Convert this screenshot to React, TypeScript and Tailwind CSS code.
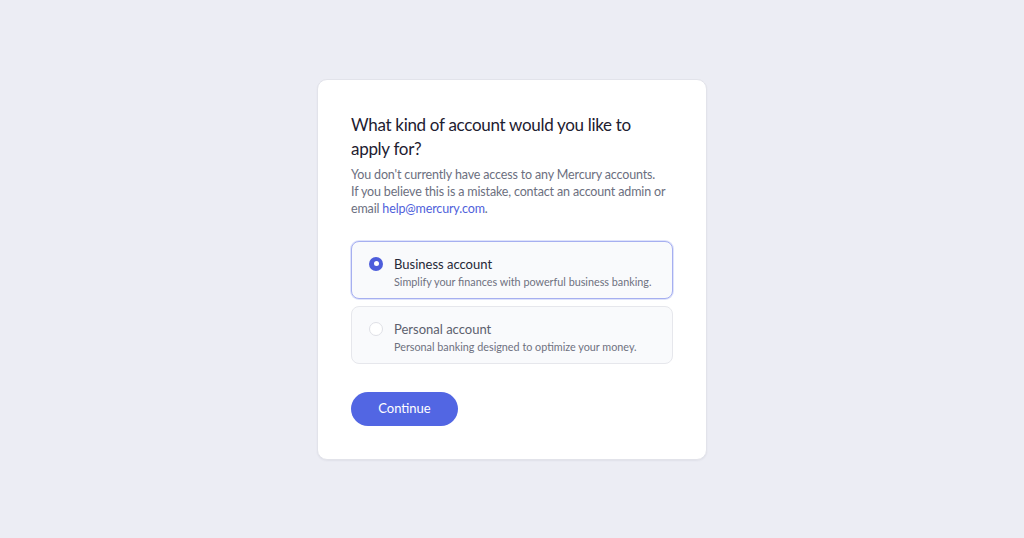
import { useState } from "react"

const OPTIONS = [
  {
    key: "business",
    title: "Business account",
    detail: "Simplify your finances with powerful business banking.",
  },
  {
    key: "personal",
    title: "Personal account",
    detail: "Personal banking designed to optimize your money.",
  },
]

export default function App() {
  const [selected, setSelected] = useState("business")

  return (
    <div
      className="flex h-[538px] w-full items-center justify-center bg-[#ecedf4]"
      style={{ fontFamily: "Lato, 'Noto Sans', sans-serif" }}
    >
      <div className="w-[390px] rounded-[10px] border border-[#e2e3ea] bg-white px-[33px] pt-[33px] pb-[33px] shadow-[0_1px_2px_rgba(30,34,60,0.06)]">
        <h1 className="text-[17px] leading-[24px] font-normal tracking-[-0.3px] text-[#1e2030]">
          What kind of account would you like to
          <br />
          apply for?
        </h1>
        <p className="mt-[5px] text-[12.5px] leading-[17px] tracking-[-0.15px] whitespace-nowrap text-[#6c6f80]">
          You don&apos;t currently have access to any Mercury accounts.
          <br />
          If you believe this is a mistake, contact an account admin or
          <br />
          email{" "}
          <a href="#" className="text-[#4f5fdb]">
            help@mercury.com
          </a>
          .
        </p>

        <div className="mt-[24px] flex flex-col gap-[7px]">
          {OPTIONS.map((opt) => {
            const active = selected === opt.key
            return (
              <button
                key={opt.key}
                type="button"
                onClick={() => setSelected(opt.key)}
                className={`flex h-[58px] w-full items-start gap-[11px] rounded-[8px] border bg-[#f9fafc] px-[17px] pt-[14px] text-left ${
                  active
                    ? "border-[#a6aff0] shadow-[0_0_0_1px_#dfe3fb]"
                    : "border-[#e6e7ec]"
                }`}
              >
                <span
                  className={`mt-[1px] flex h-[14px] w-[14px] shrink-0 items-center justify-center rounded-full ${
                    active
                      ? "bg-[#4d5ddb]"
                      : "border border-[#dfe0e6] bg-white"
                  }`}
                >
                  {active && (
                    <span className="h-[5px] w-[5px] rounded-full bg-white" />
                  )}
                </span>
                <span className="flex flex-col">
                  <span
                    className={`text-[13px] leading-[16px] ${
                      active ? "text-[#252837]" : "text-[#5c5f6e]"
                    }`}
                  >
                    {opt.title}
                  </span>
                  <span className="mt-[3px] text-[10.8px] leading-[14px] text-[#6e7180]">
                    {opt.detail}
                  </span>
                </span>
              </button>
            )
          })}
        </div>

        <button
          type="button"
          className="mt-[28px] h-[34px] w-[107px] rounded-full bg-[#5266e3] text-[13px] text-white"
        >
          Continue
        </button>
      </div>
    </div>
  )
}
